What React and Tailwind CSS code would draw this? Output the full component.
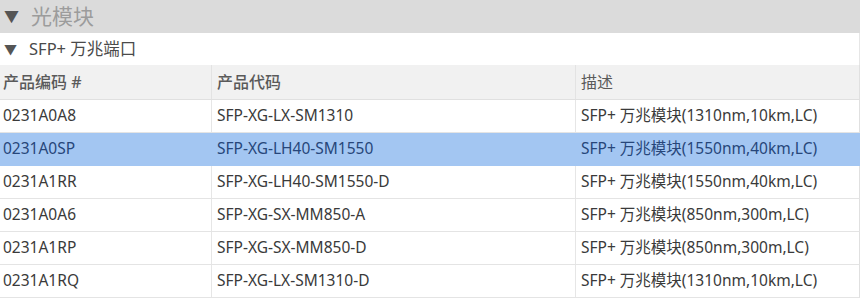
import React from 'react'

const rows = [
  ['0231A0A8', 'SFP-XG-LX-SM1310', 'SFP+ 万兆模块(1310nm,10km,LC)'],
  ['0231A0SP', 'SFP-XG-LH40-SM1550', 'SFP+ 万兆模块(1550nm,40km,LC)'],
  ['0231A1RR', 'SFP-XG-LH40-SM1550-D', 'SFP+ 万兆模块(1550nm,40km,LC)'],
  ['0231A0A6', 'SFP-XG-SX-MM850-A', 'SFP+ 万兆模块(850nm,300m,LC)'],
  ['0231A1RP', 'SFP-XG-SX-MM850-D', 'SFP+ 万兆模块(850nm,300m,LC)'],
  ['0231A1RQ', 'SFP-XG-LX-SM1310-D', 'SFP+ 万兆模块(1310nm,10km,LC)'],
]

const font = { fontFamily: '"Noto Sans", "Noto Sans CJK SC", sans-serif' }

const App = () => {
  return (
    <div className="w-[860px] h-[299px] overflow-hidden bg-white text-[#3a3a3a]" style={font}>
      {/* group header */}
      <div className="h-[33px] bg-[#dbdbdb] flex items-center pl-[4px] gap-[12px]">
        <span className="text-[15px] text-[#555555] leading-none">▼</span>
        <span className="text-[21px] text-[#9c9c9c] leading-none">光模块</span>
      </div>
      {/* sub group */}
      <div className="h-[32px] bg-white flex items-center pl-[4px] gap-[12px] border-r border-[#e6e6e6]">
        <span className="text-[13px] text-[#555555] leading-none">▼</span>
        <span className="text-[16.5px] text-[#4a4a4a] leading-none">SFP+ 万兆端口</span>
      </div>
      {/* column headers */}
      <div className="h-[35px] bg-[#f1f1f1] grid grid-cols-[211px_364px_1fr] border-b border-[#dedede] border-r border-[#e0e0e0] text-[16px] text-[#5a5a5a]">
        <div className="flex items-center pl-[3px] font-medium">产品编码 #</div>
        <div className="flex items-center pl-[5px] border-l border-[#e3e3e3] font-medium">产品代码</div>
        <div className="flex items-center pl-[5px] border-l border-[#e3e3e3]">描述</div>
      </div>
      {rows.map((r, i) => {
        const sel = i === 1
        return (
          <div
            key={r[0]}
            className={
              'h-[33px] grid grid-cols-[211px_364px_1fr] border-b text-[15.5px] ' +
              (sel
                ? 'bg-[#a3c6f2] border-[#a3c6f2] text-[#27467a]'
                : 'bg-white border-[#e4e4e4] border-r border-r-[#e0e0e0]')
            }
          >
            <div className="flex items-center pl-[3px]">{r[0]}</div>
            <div className={'flex items-center pl-[5px] border-l ' + (sel ? 'border-[#a3c6f2]' : 'border-[#e6e6e6]')}>{r[1]}</div>
            <div className={'flex items-center pl-[5px] border-l ' + (sel ? 'border-[#a3c6f2]' : 'border-[#e6e6e6]')}>{r[2]}</div>
          </div>
        )
      })}
    </div>
  )
}

export default App
